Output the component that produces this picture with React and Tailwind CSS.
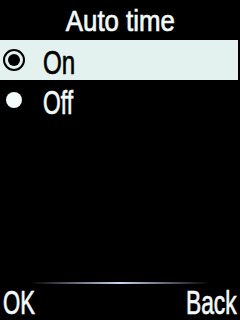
const font = { fontFamily: '"Liberation Sans", Arial, sans-serif' };

export default function App() {
  return (
    <div
      className="w-[240px] h-[320px] bg-black flex flex-col text-[#f2fafa] overflow-hidden [-webkit-text-stroke:0.7px_currentColor]"
      style={font}
    >
      <div className="h-[40px] flex items-center justify-center text-[30px] leading-none pt-[1px]">
        <span className="inline-block scale-x-[0.86]">Auto time</span>
      </div>

      <div className="h-[40px] mr-[2px] bg-[#e4f2ef] flex items-center text-black">
        <div className="w-[22px] h-[22px] ml-[3px] rounded-full border-2 border-black flex items-center justify-center">
          <div className="w-[12px] h-[12px] rounded-full bg-black" />
        </div>
        <span className="ml-[18px] pt-[4px] text-[34px] leading-none inline-block scale-x-[0.71] origin-left">On</span>
      </div>

      <div className="h-[40px] flex items-center">
        <div className="w-[22px] h-[22px] ml-[3px] flex items-center justify-center">
          <div className="w-[16px] h-[16px] rounded-full bg-[#f2fafa]" />
        </div>
        <span className="ml-[18px] pt-[4px] text-[34px] leading-none inline-block scale-x-[0.67] origin-left">Off</span>
      </div>

      <div className="flex-1" />

      <div className="h-[2px] mx-[30px] bg-gradient-to-r from-transparent via-[#c8d4f0] to-transparent" />

      <div className="h-[36px] flex items-start justify-between px-[3px] pt-[3px] text-[34px] leading-[30px]">
        <span className="inline-block scale-x-[0.65] origin-left">OK</span>
        <span className="inline-block scale-x-[0.67] origin-right">Back</span>
      </div>
    </div>
  );
}
